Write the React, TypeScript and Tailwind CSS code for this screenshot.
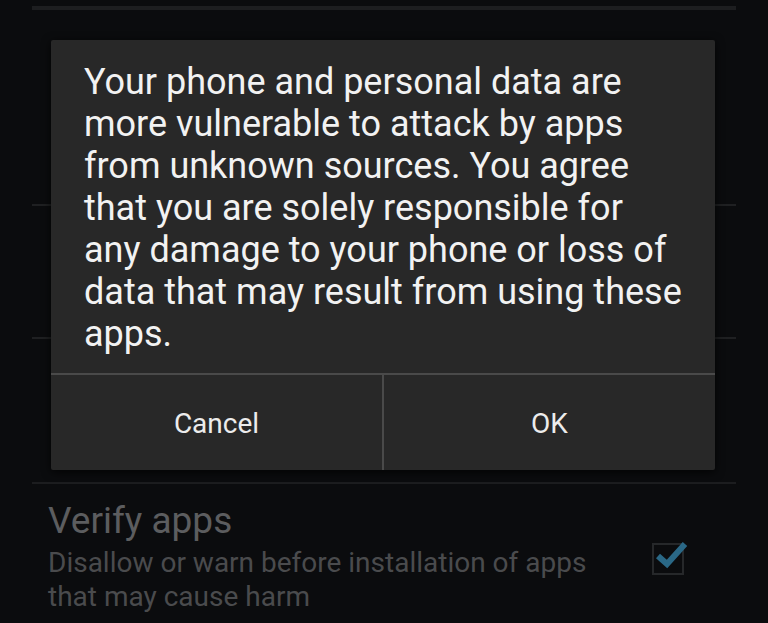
export default function App() {
  return (
    <div
      className="relative h-[623px] w-[768px] overflow-hidden bg-[#0b0c0e]"
      style={{ fontFamily: "Roboto, 'Liberation Sans', sans-serif" }}
    >
      {/* settings list behind the dialog */}
      <div className="flex flex-col pt-[6px]">
        <div className="mx-[32px] h-[4px] bg-[#1d1e20]" />
        <div className="h-[194px]" />
        <div className="mx-[32px] h-[2px] bg-[#1f2022]" />
        <div className="h-[131px]" />
        <div className="mx-[32px] h-[2px] bg-[#1f2022]" />
        <div className="h-[143px]" />
        <div className="mx-[32px] h-[2px] bg-[#1c1d1f]" />
        <div className="flex items-start justify-between pl-[48px] pr-[84px] pt-[15px]">
          <div>
            <p className="text-[37px] leading-[44px] text-[#5c5d5f]">Verify apps</p>
            <p className="mt-[3px] text-[28px] leading-[34px] text-[#4a4b4d]">
              Disallow or warn before installation of apps
              <br />
              that may cause harm
            </p>
          </div>
          <div className="relative mt-[40px] h-[34px] w-[34px]">
            <div className="absolute left-[2px] top-[4px] h-[32px] w-[32px] border-2 border-[#26282a]" />
            <svg
              className="absolute left-[2px] top-[-5px]"
              width="40"
              height="40"
              viewBox="0 0 40 40"
            >
              <path
                d="M6 22 L15 30 L33 10"
                fill="none"
                stroke="#2a6886"
                strokeWidth="6"
              />
            </svg>
          </div>
        </div>
      </div>

      {/* dialog */}
      <div className="absolute left-[51px] top-[40px] flex w-[664px] flex-col rounded-[2px] bg-[#282828] shadow-[0_2px_10px_rgba(0,0,0,0.8)]">
        <p className="whitespace-nowrap px-[33px] pb-[18px] pt-[21px] text-[36px] leading-[42px] text-[#f2f2f2]">
          Your phone and personal data are
          <br />
          more vulnerable to attack by apps
          <br />
          from unknown sources. You agree
          <br />
          that you are solely responsible for
          <br />
          any damage to your phone or loss of
          <br />
          data that may result from using these
          <br />
          apps.
        </p>
        <div className="h-[2px] bg-[#4a4a4a]" />
        <div className="flex h-[95px]">
          <button className="flex flex-1 items-center justify-center pt-[3px] text-[28px] text-[#ececec]">
            Cancel
          </button>
          <div className="w-[2px] bg-[#4a4a4a]" />
          <button className="flex flex-1 items-center justify-center pt-[3px] text-[28px] text-[#ececec]">
            OK
          </button>
        </div>
      </div>
    </div>
  );
}
